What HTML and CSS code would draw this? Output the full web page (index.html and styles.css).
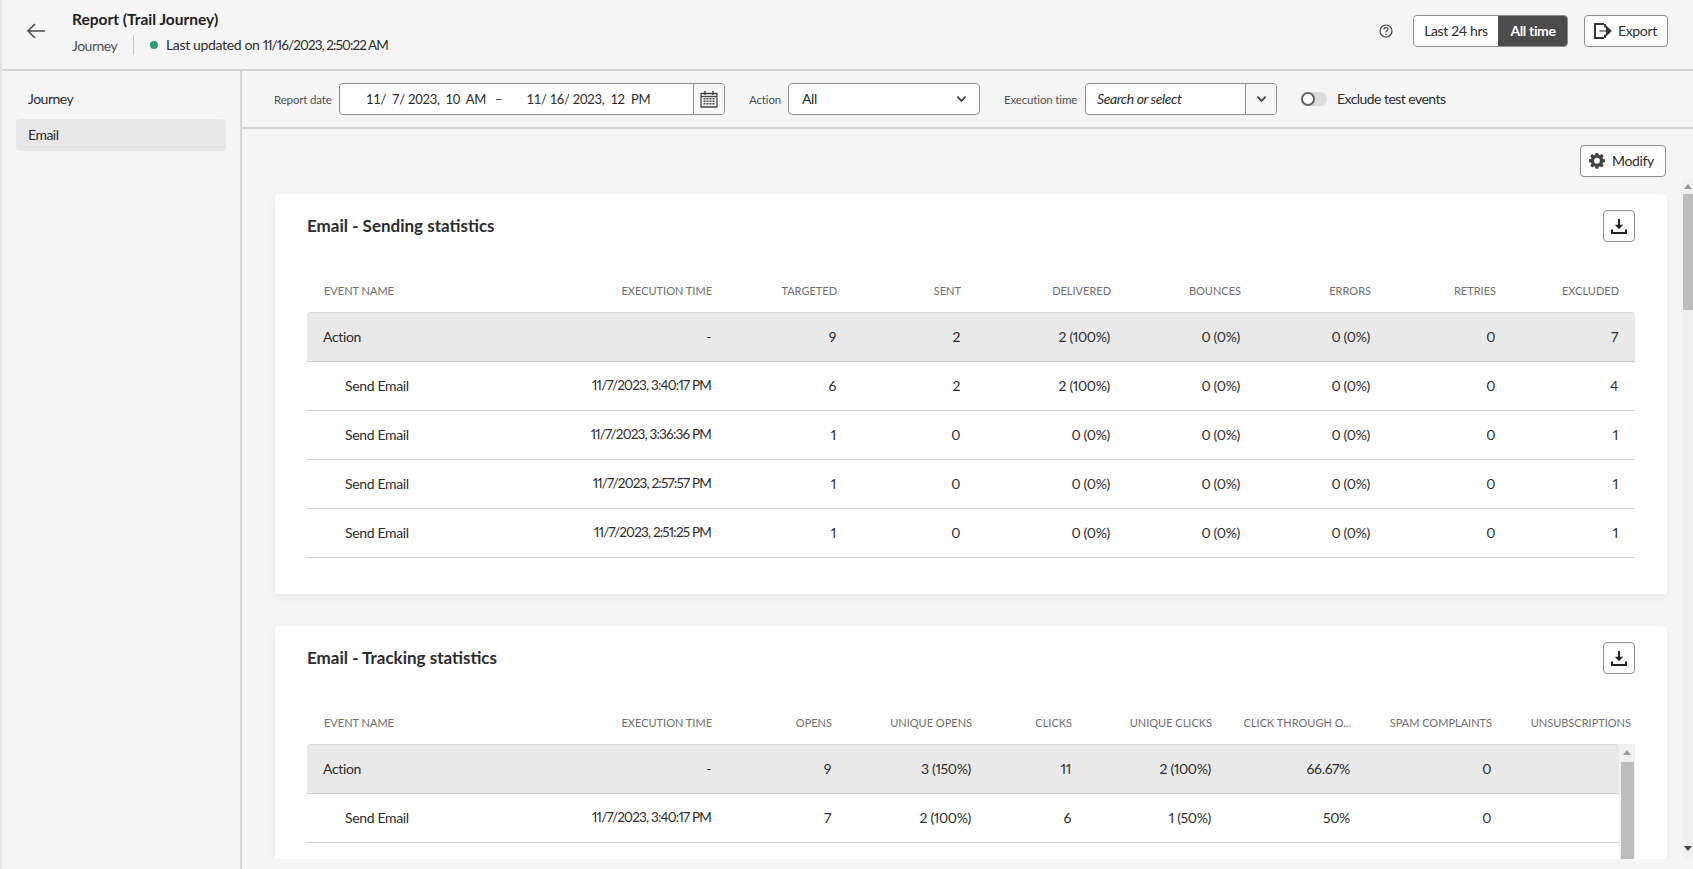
FILE: index.html
```html
<!DOCTYPE html>
<html lang="en">
<head>
<meta charset="utf-8">
<title>Report (Trail Journey)</title>
<link rel="stylesheet" href="styles.css">
</head>
<body>
<div class="app">
  <header class="topbar">
    <div class="topbar-left">
      <svg class="back" viewBox="0 0 20 18" width="20" height="18"><path d="M19 9H2M9 2 2 9l7 7" fill="none" stroke="#4b4b4b" stroke-width="1.5"/></svg>
      <div class="title-block">
        <h1 class="title">Report (Trail Journey)</h1>
        <div class="subtitle">
          <span class="sub-type">Journey</span>
          <span class="sub-sep"></span>
          <span class="dot"></span>
          <span class="updated">Last updated on <span class="digits">11/16/2023, 2:50:22 AM</span></span>
        </div>
      </div>
    </div>
    <div class="topbar-right">
      <svg class="help" viewBox="0 0 14 14" width="14" height="14"><circle cx="7" cy="7" r="6" fill="none" stroke="#444" stroke-width="1.2"/><path d="M5 5.400C5 4.200 6 3.600 7 3.600s2 .6 2 1.700c0 1.500-2 1.500-2 3" fill="none" stroke="#444" stroke-width="1.2"/><circle cx="7" cy="10.300" r=".8" fill="#444"/></svg>
      <div class="segmented">
        <span class="seg">Last 24 hrs</span>
        <span class="seg seg-on">All time</span>
      </div>
      <span class="btn btn-export">
        <svg viewBox="0 0 18 16" width="18" height="16"><path d="M10 1H1v14h9M11 1v3.500M11 11.500V15" fill="none" stroke="#333" stroke-width="1.900"/><path d="M5.500 8H13M12.500 3.800 17 8l-4.500 4.200z" fill="#333" stroke="#333" stroke-width="1.200"/></svg>
        Export
      </span>
    </div>
  </header>
  <div class="body-row">
    <nav class="sidebar">
      <div class="nav-item">Journey</div>
      <div class="nav-item nav-on">Email</div>
    </nav>
    <main class="main">
      <div class="filters">
        <label class="flabel flabel-date">Report date</label>
        <div class="field field-date">
          <span class="date-text">11/  7/ 2023,  10  AM   –        11/ 16/ 2023,  12  PM</span>
          <span class="field-btn">
            <svg viewBox="0 0 18 18" width="18" height="18"><path d="M1 3.500h16v13.500H1z" fill="none" stroke="#444" stroke-width="1.300"/><path d="M1 6.500h16" stroke="#444" stroke-width="1.300"/><path d="M5 1v4M13 1v4" stroke="#444" stroke-width="1.500"/><path d="M3.500 8h2v1.500h-2zM6.500 8h2v1.500h-2zM9.500 8h2v1.500h-2zM12.500 8h2v1.500h-2zM3.500 10.500h2V12h-2zM6.500 10.500h2V12h-2zM9.500 10.500h2V12h-2zM12.500 10.500h2V12h-2zM3.500 13h2v1.500h-2zM6.500 13h2v1.500h-2zM9.500 13h2v1.500h-2zM12.500 13h2v1.500h-2z" fill="#444"/></svg>
          </span>
        </div>
        <label class="flabel flabel-action">Action</label>
        <div class="field field-select">
          <span class="field-text">All</span>
          <svg viewBox="0 0 12 8" width="11" height="8"><path d="M1.500 1.500 6 6l4.500-4.500" fill="none" stroke="#444" stroke-width="2"/></svg>
        </div>
        <label class="flabel flabel-exec">Execution time</label>
        <div class="field field-combo">
          <span class="placeholder field-text">Search or select</span>
          <span class="field-btn combo-btn">
            <svg viewBox="0 0 12 8" width="11" height="8"><path d="M1.500 1.500 6 6l4.500-4.500" fill="none" stroke="#444" stroke-width="2"/></svg>
          </span>
        </div>
        <span class="toggle"><span class="knob"></span></span>
        <span class="toggle-label">Exclude test events</span>
      </div>
      <div class="modify-row">
        <span class="btn btn-modify">
          <svg viewBox="0 0 16 16" width="16" height="16"><path fill="#444" fill-rule="evenodd" d="M6.600 0h2.800l.4 2.200 1.300.6 1.900-1.300 2 2-1.300 1.900.6 1.300 2.200.4v2.800l-2.200.4-.6 1.300 1.300 1.900-2 2-1.900-1.300-1.300.6-.4 2.200H6.600l-.4-2.200-1.300-.6L3 15.500l-2-2 1.300-1.900-.6-1.300L-.5 9.900V7.100l2.200-.4.6-1.300L1 3.500l2-2 1.900 1.300 1.300-.6zM8 5.500a3 3 0 1 0 0 6 3 3 0 0 0 0-6z" transform="translate(.3 -.5) scale(.96)"/></svg>
          Modify
        </span>
      </div>
      <div class="scroller">
        <section class="card card-sending">
          <div class="card-head">
            <h2 class="card-title">Email - Sending statistics</h2>
            <span class="icon-btn"><svg viewBox="0 0 16 16" width="16" height="16"><path d="M8 1v8" stroke="#222" stroke-width="2"/><path d="M3.800 6.800h8.400L8 11.200z" fill="#222"/><path d="M1 11.500V15h14v-3.500" fill="none" stroke="#222" stroke-width="2"/></svg></span>
          </div>
          <div class="table">
            <div class="row row-head"><span>EVENT NAME</span><span>EXECUTION TIME</span><span>TARGETED</span><span>SENT</span><span>DELIVERED</span><span>BOUNCES</span><span>ERRORS</span><span>RETRIES</span><span>EXCLUDED</span></div>
            <div class="row row-group"><span>Action</span><span>-</span><span>9</span><span>2</span><span>2 (100%)</span><span>0 (0%)</span><span>0 (0%)</span><span>0</span><span>7</span></div>
            <div class="row row-child"><span>Send Email</span><span class="digits">11/7/2023, 3:40:17 PM</span><span>6</span><span>2</span><span>2 (100%)</span><span>0 (0%)</span><span>0 (0%)</span><span>0</span><span>4</span></div>
            <div class="row row-child"><span>Send Email</span><span class="digits">11/7/2023, 3:36:36 PM</span><span>1</span><span>0</span><span>0 (0%)</span><span>0 (0%)</span><span>0 (0%)</span><span>0</span><span>1</span></div>
            <div class="row row-child"><span>Send Email</span><span class="digits">11/7/2023, 2:57:57 PM</span><span>1</span><span>0</span><span>0 (0%)</span><span>0 (0%)</span><span>0 (0%)</span><span>0</span><span>1</span></div>
            <div class="row row-child"><span>Send Email</span><span class="digits">11/7/2023, 2:51:25 PM</span><span>1</span><span>0</span><span>0 (0%)</span><span>0 (0%)</span><span>0 (0%)</span><span>0</span><span>1</span></div>
          </div>
        </section>
        <section class="card card-tracking">
          <div class="card-head">
            <h2 class="card-title">Email - Tracking statistics</h2>
            <span class="icon-btn"><svg viewBox="0 0 16 16" width="16" height="16"><path d="M8 1v8" stroke="#222" stroke-width="2"/><path d="M3.800 6.800h8.400L8 11.200z" fill="#222"/><path d="M1 11.500V15h14v-3.500" fill="none" stroke="#222" stroke-width="2"/></svg></span>
          </div>
          <div class="table">
            <div class="row row-head"><span>EVENT NAME</span><span>EXECUTION TIME</span><span>OPENS</span><span>UNIQUE OPENS</span><span>CLICKS</span><span>UNIQUE CLICKS</span><span>CLICK THROUGH O...</span><span>SPAM COMPLAINTS</span><span>UNSUBSCRIPTIONS</span></div>
            <div class="tbody">
              <div class="tbody-clip">
                <div class="row row-group"><span>Action</span><span>-</span><span>9</span><span>3 (150%)</span><span>11</span><span>2 (100%)</span><span>66.67%</span><span>0</span></div>
                <div class="row row-child"><span>Send Email</span><span class="digits">11/7/2023, 3:40:17 PM</span><span>7</span><span>2 (100%)</span><span>6</span><span>1 (50%)</span><span>50%</span><span>0</span></div>
              </div>
              <div class="sb sb-inner"><span class="sb-up"></span><span class="sb-thumb"></span></div>
            </div>
          </div>
        </section>
        <div class="sb sb-main"><span class="sb-up"></span><span class="sb-thumb"></span><span class="sb-down"></span></div>
      </div>
    </main>
  </div>
</div>
</body>
</html>
```
FILE: styles.css
```css
* { box-sizing: border-box; }
html, body { margin: 0; height: 100%; overflow: hidden; }
body {
  background: #f5f5f5;
  color: #2c2c2c;
  font-family: Lato, "Open Sans", sans-serif;
  font-size: 14px;
  letter-spacing: -.35px;
  font-variant-numeric: proportional-nums;
}
.digits { font-size: 13.500px; letter-spacing: -.8px; line-height: 17px; }
.updated .digits { letter-spacing: -.9px; }
.app { width: 1693px; height: 869px; display: flex; flex-direction: column; border-left: 2px solid #e6e6e6; }
.topbar {
  height: 71px; flex: none; display: flex; justify-content: space-between; align-items: flex-start;
  border-bottom: 2px solid #d5d5d5; padding: 15px 25px 0 24px;
}
.topbar-left { display: flex; }
.back { margin: 7px 0 0 0; }
.title-block { margin-left: 26px; }
.title { margin: -6px 0 0; font-size: 15.500px; font-weight: 700; line-height: 20px; color: #222; letter-spacing: 0; }
.subtitle { display: flex; align-items: center; margin-top: 6px; height: 20px; }
.sub-type { color: #505050; width: 45px; letter-spacing: -.5px; }
.sub-sep { width: 1px; height: 20px; background: #c8c8c8; margin: 0 16px; }
.dot { width: 8px; height: 8px; border-radius: 50%; background: #2d9d78; margin-right: 8px; }
.topbar-right { display: flex; align-items: center; height: 32px; }
.help { margin-right: 20px; }
.segmented { display: flex; height: 32px; border-radius: 4px; overflow: hidden; border: 1px solid #8e8e8e; margin-right: 16px; }
.seg { width: 84px; display: flex; align-items: center; justify-content: center; background: #fff; padding-bottom: 1px; }
.seg-on { width: 70px; background: #4b4b4b; color: #fff; font-weight: 700; margin: -1px -1px -1px 0; }
.btn {
  height: 32px; display: inline-flex; align-items: center; background: #fff; border: 1px solid #8e8e8e; border-radius: 4px;
  flex: none; padding-bottom: 1px;
}
.btn-export { width: 84px; padding-left: 9px; gap: 6px; }
.btn-modify { width: 86px; padding-left: 8px; gap: 7px; }
.body-row { flex: 1; display: flex; min-height: 0; }
.sidebar { width: 240px; flex: none; border-right: 2px solid #d5d5d5; padding: 12px 14px; }
.nav-item { height: 32px; display: flex; align-items: center; padding: 0 0 2px 12px; border-radius: 4px; margin-bottom: 4px; letter-spacing: -.5px; }
.nav-on { background: #e8e8e8; }
.main { flex: 1; min-width: 0; display: flex; flex-direction: column; }
.filters {
  height: 58px; flex: none; display: flex; align-items: center; border-bottom: 2px solid #d5d5d5; padding: 0 0 0 32px;
}
.flabel { font-size: 11.500px; color: #505050; flex: none; letter-spacing: -.15px; }
.flabel-date { width: 65px; }
.flabel-action { width: 39px; margin-left: 24px; }
.flabel-exec { width: 81px; margin-left: 24px; }
.field { height: 32px; background: #fff; border: 1px solid #8e8e8e; border-radius: 4px; display: flex; align-items: center; flex: none; }
.field-text { padding-bottom: 2px; }
.field-date { width: 386px; }
.date-text { flex: 1; white-space: pre; padding-left: 26px; font-size: 13px; letter-spacing: -.3px; font-variant-numeric: tabular-nums; }
.field-btn { width: 31px; height: 30px; border-left: 1px solid #8e8e8e; background: #f8f8f8; border-radius: 0 3px 3px 0; display: flex; align-items: center; justify-content: center; }
.field-select { width: 192px; justify-content: space-between; padding: 0 12px 0 13px; }
.field-combo { width: 192px; }
.placeholder { flex: 1; font-style: italic; padding-left: 11px; letter-spacing: -.4px; }
.toggle { width: 26px; height: 14px; margin-left: 24px; border-radius: 7px; background: #dcdcdc; position: relative; flex: none; }
.knob { position: absolute; left: 0; top: 0; width: 14px; height: 14px; border-radius: 50%; background: #fff; border: 2px solid #666; }
.toggle-label { margin-left: 10px; padding-bottom: 2px; letter-spacing: -.55px; }
.modify-row { height: 49px; flex: none; display: flex; justify-content: flex-end; padding: 16px 27px 0 0; }
.scroller { flex: none; height: 681px; overflow: hidden; position: relative; padding: 16px 26px 0 33px; }
.card { background: #fff; border-radius: 4px; box-shadow: 0 3px 10px rgba(0,0,0,.06); padding: 0 32px; }
.card-sending { height: 400px; margin-bottom: 32px; }
.card-tracking { height: 400px; }
.card-head { height: 86px; display: flex; justify-content: space-between; padding-top: 16px; }
.card-title { margin: 0; font-size: 17px; font-weight: 700; line-height: 32px; letter-spacing: 0; }
.icon-btn { width: 32px; height: 32px; border: 1px solid #8e8e8e; border-radius: 4px; display: flex; align-items: center; justify-content: center; }
.row { display: grid; text-align: right; align-items: center; }
.row > span { padding-right: 17px; white-space: nowrap; }
.row > span:first-child { text-align: left; padding-right: 0; }
.card-sending .row { grid-template-columns: 230px 191px 125px 124px 150px 130px 130px 125px 123px; }
.card-tracking .row { grid-template-columns: 230px 191px 120px 140px 100px 140px 139px 141px 139px; }
.row-head { height: 32px; padding-bottom: 11px; font-size: 11px; color: #6e6e6e; letter-spacing: 0; }
.row-head > span { padding-right: 16px; }
.row-head > span:first-child { padding-left: 17px; }
.row-group { height: 50px; padding-bottom: 2px; background: #e9e9e9; border-top: 1px solid #d8d8d8; border-bottom: 1px solid #d0d0d0; border-radius: 4px 4px 0 0; }
.row-group > span:first-child { padding-left: 16px; }
.row-child { height: 49px; padding-bottom: 2px; border-bottom: 1px solid #d5d5d5; }
.row-child > span:first-child { padding-left: 38px; }
.tbody { position: relative; padding-right: 16px; }
.tbody-clip { overflow: hidden; }
.sb { position: absolute; top: 0; right: 0; background: #f1f1f1; display: block; }
.sb-inner { width: 16px; height: 115px; }
.sb-main { width: 10px; height: 681px; }
.sb-thumb { position: absolute; background: #bdbdbd; }
.sb-inner .sb-thumb { left: 2px; right: 1px; top: 18px; bottom: 0; }
.sb-main .sb-thumb { left: 0; right: 0; top: 16px; height: 116px; }
.sb-up, .sb-down { position: absolute; width: 0; height: 0; border-left: 4px solid transparent; border-right: 4px solid transparent; }
.sb-up { top: 6px; left: 4px; border-bottom: 5px solid #9a9a9a; }
.sb-main .sb-up { left: 1px; }
.sb-down { bottom: 8px; left: 1px; border-top: 5px solid #444; }
```
